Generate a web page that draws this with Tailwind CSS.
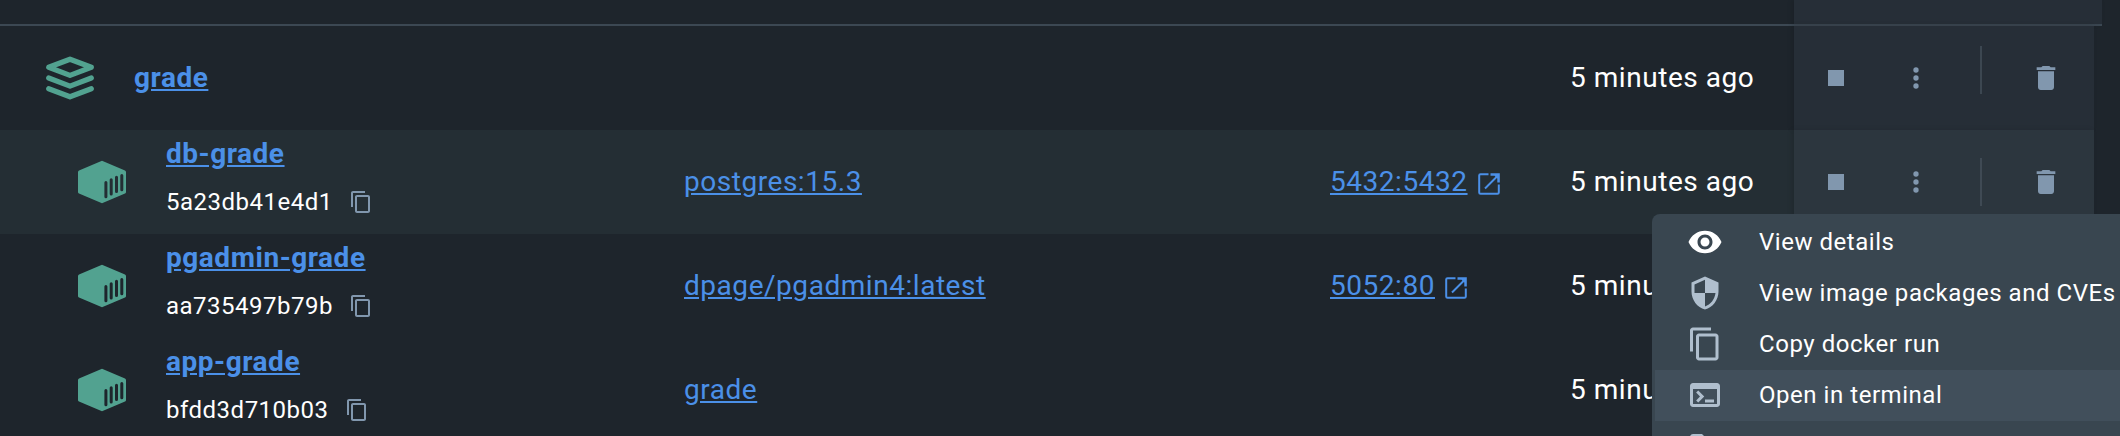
<!DOCTYPE html>
<html lang="en">
<head>
<meta charset="utf-8">
<title>Containers</title>
<script src="https://cdn.jsdelivr.net/npm/@tailwindcss/browser@4"></script>
</head>
<body class="relative h-[436px] w-[2120px] overflow-hidden bg-[#1e252c] font-[Roboto,sans-serif] text-[28px] leading-8 tracking-[0.54px] text-white">
<svg class="hidden">
  <symbol id="stack" viewBox="0 0 48 44"><g fill="none" stroke="currentColor" stroke-width="5.200" stroke-linejoin="round" stroke-linecap="round"><path d="M2.700 11.300 24 3.200l21.300 8.100L24 19.400z"/><path d="M2.700 22 24 30.100l21.300-8.100"/><path d="M2.700 32.700 24 40.800l21.300-8.100"/></g></symbol>
  <symbol id="box" viewBox="0 0 48 44"><path fill="currentColor" fill-rule="evenodd" d="M24 .8 47 10.500q1 .5 1 1.500v20q0 1-1 1.500L24 43.200 1 33.500q-1-.5-1-1.500V12q0-1 1-1.500zM26.400 22.500q0-1.500 1.500-1.500t1.500 1.500v14.300q0 1.500-1.500 1.500t-1.500-1.500zm5.300-2.700q0-1.500 1.500-1.500t1.500 1.500v14.300q0 1.500-1.500 1.500t-1.500-1.500zm5.300-2.600q0-1.500 1.500-1.500t1.500 1.500v14.300q0 1.500-1.500 1.500t-1.500-1.500zm5.300-1.700q0-1.500 1.500-1.500t1.500 1.500v14.300q0 1.500-1.500 1.500t-1.500-1.500z"/></symbol>
  <symbol id="copy" viewBox="0 0 24 24"><path fill="currentColor" d="M16 1H4c-1.100 0-2 .9-2 2v14h2V3h12V1zm3 4H8c-1.100 0-2 .9-2 2v14c0 1.100.9 2 2 2h11c1.100 0 2-.9 2-2V7c0-1.100-.9-2-2-2zm0 16H8V7h11v14z"/></symbol>
  <symbol id="open" viewBox="0 0 24 24"><path fill="none" stroke="currentColor" stroke-width="2" d="M11.500 2.200H3.500q-1.300 0-1.300 1.300v17q0 1.300 1.300 1.300h17q1.300 0 1.300-1.300V12.500M8 16.500 21 3.500"/><path fill="currentColor" d="M13.500 1.200H22.800V10.500H20.300V6.500L17.500 3.700H13.500z"/></symbol>
  <symbol id="more" viewBox="0 0 24 24"><g fill="currentColor"><circle cx="12" cy="6" r="2"/><circle cx="12" cy="12" r="2"/><circle cx="12" cy="18" r="2"/></g></symbol>
  <symbol id="trash" viewBox="0 0 24 24"><path fill="currentColor" d="M6 19c0 1.100.9 2 2 2h8c1.100 0 2-.9 2-2V7H6v12zM19 4h-3.500l-1-1h-5l-1 1H5v2h14V4z"/></symbol>
  <symbol id="eye" viewBox="0 0 24 24"><path fill="currentColor" d="M12 4.500C7 4.500 2.730 7.610 1 12c1.730 4.390 6 7.500 11 7.500s9.270-3.110 11-7.500c-1.730-4.390-6-7.500-11-7.500zM12 17c-2.760 0-5-2.240-5-5s2.240-5 5-5 5 2.240 5 5-2.240 5-5 5zm0-8c-1.660 0-3 1.340-3 3s1.340 3 3 3 3-1.340 3-3-1.340-3-3-3z"/></symbol>
  <symbol id="shield" viewBox="0 0 24 24"><path fill="currentColor" d="M12 1L3 5v6c0 5.550 3.840 10.740 9 12 5.160-1.260 9-6.450 9-12V5l-9-4zm0 10.990h7c-.53 4.120-3.280 7.790-7 8.940V12H5V6.300l7-3.110v8.800z"/></symbol>
  <symbol id="folder" viewBox="0 0 24 24"><path fill="currentColor" d="M9.170 6l2 2H20v10H4V6h5.170M10 4H4c-1.100 0-1.990.9-1.990 2L2 18c0 1.100.9 2 2 2h16c1.100 0 2-.9 2-2V8c0-1.100-.9-2-2-2h-8l-2-2z"/></symbol>
  <symbol id="terminal" viewBox="0 0 24 24"><path fill="currentColor" d="M20 4H4c-1.110 0-2 .9-2 2v12c0 1.100.89 2 2 2h16c1.100 0 2-.9 2-2V6c0-1.100-.89-2-2-2zm0 14H4V8h16v10zm-2-1h-6v-2h6v2zM7.500 17l-1.410-1.410L8.670 13l-2.590-2.590L7.500 9l4 4-4 4z"/></symbol>
</svg>

<!-- Table header edge -->
<div class="flex h-[26px] w-[2102px] border-b-2 border-[#3c4853]">
  <div class="ml-[1794px] grow bg-[#262e37] shadow-[-2px_0_5px_rgba(0,0,0,0.12)]"></div>
</div>

<!-- Compose group -->
<div class="flex h-[104px] w-[2094px] items-center">
  <svg class="ml-[46px] h-[44px] w-12 text-[#52a290]"><use href="#stack"/></svg>
  <div class="ml-10 w-[1436px]"><a class="font-bold text-[#4b90e8] underline">grade</a></div>
  <div class="w-[224px] whitespace-nowrap">5 minutes ago</div>
  <div class="flex h-full w-[300px] items-center bg-[#262e37] text-[#8197ae] shadow-[-2px_0_5px_rgba(0,0,0,0.12)]">
    <div class="ml-[34px] size-4 bg-[#8197ae]"></div>
    <svg class="ml-14 size-8"><use href="#more"/></svg>
    <div class="mb-4 ml-12 h-12 w-0.5 bg-[#3c4751]"></div>
    <svg class="ml-12 size-8"><use href="#trash"/></svg>
  </div>
</div>

<!-- Containers -->
<div class="flex h-[104px] w-[2094px] items-center bg-[#242e34]">
  <svg class="ml-[78px] h-[44px] w-12 text-[#52a290]"><use href="#box"/></svg>
  <div class="ml-10 h-full w-[518px] pt-2">
    <a class="block font-bold text-[#4b90e8] underline">db-grade</a>
    <div class="mt-4 flex items-center text-2xl tracking-[0.5px]"><span>5a23db41e4d1</span><svg class="ml-4 size-6 text-[#8197ae]"><use href="#copy"/></svg></div>
  </div>
  <div class="w-[646px]"><a class="text-[#4b90e8] underline">postgres:15.3</a></div>
  <div class="flex w-[240px] items-center text-[#4b90e8]"><a class="underline">5432:5432</a><svg class="ml-[9px] mt-1 size-6"><use href="#open"/></svg></div>
  <div class="w-[224px] whitespace-nowrap">5 minutes ago</div>
  <div class="flex h-full w-[300px] items-center bg-[#2c363e] text-[#8197ae] shadow-[-2px_0_5px_rgba(0,0,0,0.12)]">
    <div class="ml-[34px] size-4 bg-[#8197ae]"></div>
    <svg class="ml-14 size-8"><use href="#more"/></svg>
    <div class="ml-12 h-12 w-0.5 bg-[#3f4a54]"></div>
    <svg class="ml-12 size-8"><use href="#trash"/></svg>
  </div>
</div>

<div class="flex h-[104px] w-[2094px] items-center">
  <svg class="ml-[78px] h-[44px] w-12 text-[#52a290]"><use href="#box"/></svg>
  <div class="ml-10 h-full w-[518px] pt-2">
    <a class="block font-bold text-[#4b90e8] underline">pgadmin-grade</a>
    <div class="mt-4 flex items-center text-2xl tracking-[0.5px]"><span>aa735497b79b</span><svg class="ml-4 size-6 text-[#8197ae]"><use href="#copy"/></svg></div>
  </div>
  <div class="w-[646px]"><a class="text-[#4b90e8] underline">dpage/pgadmin4:latest</a></div>
  <div class="flex w-[240px] items-center text-[#4b90e8]"><a class="underline">5052:80</a><svg class="ml-[9px] mt-1 size-6"><use href="#open"/></svg></div>
  <div class="w-[224px] whitespace-nowrap">5 minutes ago</div>
</div>

<div class="flex h-[104px] w-[2094px] items-center">
  <svg class="ml-[78px] h-[44px] w-12 text-[#52a290]"><use href="#box"/></svg>
  <div class="ml-10 h-full w-[518px] pt-2">
    <a class="block font-bold text-[#4b90e8] underline">app-grade</a>
    <div class="mt-4 flex items-center text-2xl tracking-[0.5px]"><span>bfdd3d710b03</span><svg class="ml-4 size-6 text-[#8197ae]"><use href="#copy"/></svg></div>
  </div>
  <div class="w-[886px]"><a class="text-[#4b90e8] underline">grade</a></div>
  <div class="w-[224px] whitespace-nowrap">5 minutes ago</div>
</div>

<!-- Row actions menu -->
<div class="absolute left-[1652px] top-[214px] h-[222px] w-[468px] overflow-hidden rounded-tl-lg bg-[#394650] pl-[3px] pt-[3px] text-2xl tracking-[0.54px]">
  <div class="flex h-[51px] items-center whitespace-nowrap pb-px pl-8"><svg class="mr-9 size-9 shrink-0"><use href="#eye"/></svg>View details</div>
  <div class="flex h-[51px] items-center whitespace-nowrap pb-px pl-8"><svg class="mr-9 size-9 shrink-0 text-[#b0bfce]"><use href="#shield"/></svg>View image packages and CVEs</div>
  <div class="flex h-[51px] items-center whitespace-nowrap pb-px pl-8"><svg class="mr-9 size-9 shrink-0 text-[#b0bfce]"><use href="#copy"/></svg>Copy docker run</div>
  <div class="flex h-[51px] items-center whitespace-nowrap bg-[#414f5b] pb-px pl-8"><svg class="mr-9 size-9 shrink-0 text-[#b0bfce]"><use href="#terminal"/></svg>Open in terminal</div>
  <div class="flex h-[51px] items-center whitespace-nowrap pb-px pl-8"><svg class="mr-9 size-9 shrink-0 text-[#b0bfce]"><use href="#folder"/></svg>View files</div>
</div>
</body>
</html>
